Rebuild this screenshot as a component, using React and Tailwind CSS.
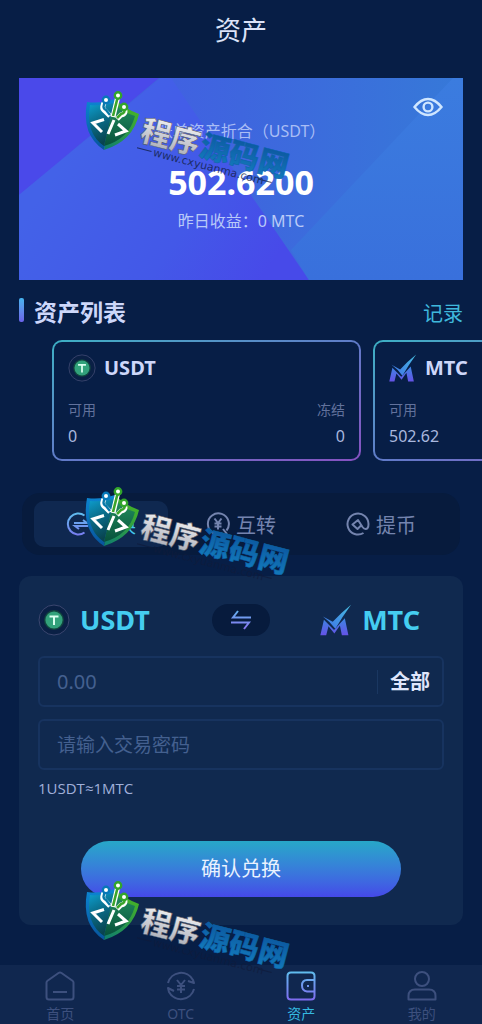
import React, { useId } from "react";

function Watermark({ className }) {
  const id = useId().replace(/:/g, "");
  return (
    <svg
      aria-hidden="true"
      className={`pointer-events-none absolute z-10 overflow-visible ${className}`}
      width="214"
      height="94"
      viewBox="0 0 214 94"
      fill="none"
    >
      <defs>
        <linearGradient id={`${id}l`} x1="0" y1="0" x2="0" y2="1">
          <stop offset="0" stopColor="#0c86d2" />
          <stop offset="1" stopColor="#07549c" />
        </linearGradient>
        <linearGradient id={`${id}r`} x1="0.8" y1="0" x2="0.2" y2="1">
          <stop offset="0" stopColor="#4bb81f" />
          <stop offset="1" stopColor="#12806a" />
        </linearGradient>
        <linearGradient id={`${id}i`} x1="0" y1="0" x2="0.3" y2="1">
          <stop offset="0" stopColor="#0d9fd0" />
          <stop offset="0.5" stopColor="#0a6a86" />
          <stop offset="1" stopColor="#08434f" />
        </linearGradient>
        <linearGradient id={`${id}g`} x1="0" y1="0" x2="0" y2="1">
          <stop offset="0" stopColor="#23915f" />
          <stop offset="1" stopColor="#07503b" />
        </linearGradient>
        <linearGradient id={`${id}s`} x1="0" y1="0" x2="0" y2="1">
          <stop offset="0" stopColor="#ffffff" />
          <stop offset="1" stopColor="#a3a6b2" />
        </linearGradient>
        <linearGradient id={`${id}b`} x1="0" y1="0" x2="0" y2="1">
          <stop offset="0" stopColor="#0a4f98" />
          <stop offset="1" stopColor="#147fc0" />
        </linearGradient>
      </defs>
      <path d="M3 12 Q17 14 31 9 L20 60 Q-3 45 3 12Z" fill={`url(#${id}l)`} />
      <path d="M31 9 Q41 19 55 24 Q49 51 20 60Z" fill={`url(#${id}r)`} />
      <path d="M6 15 Q19 16 30 13 L20 56 Q1 43 6 15Z" fill={`url(#${id}i)`} />
      <path d="M30 13 Q40 23 51 26 Q45 49 20 56Z" fill={`url(#${id}g)`} />
      <path d="M22 10 Q16 18 21 21 L26 26 M34 6 L29 27 M40 18 Q43 24 37 25 L33 29" stroke="#fff" strokeWidth="5" />
      <path d="M22 10 Q17 18 22 20 L26 25" stroke="#0878a8" strokeWidth="2.4" />
      <path d="M34 6 L29 26 M40 18 Q42 23 37 24 L33 28" stroke="#3ba52b" strokeWidth="2.6" />
      <circle cx="22" cy="10" r="3.200" fill="#fff" stroke="#0878b8" strokeWidth="2.400" />
      <circle cx="34" cy="5.500" r="3.200" fill="#fff" stroke="#32a52a" strokeWidth="2.400" />
      <circle cx="40" cy="17" r="3.200" fill="#fff" stroke="#32a52a" strokeWidth="2.400" />
      <path d="M20 29.500 L9 33 L18 42 M30 30 L24 44 M34 34 L42 41 L31 45" stroke="#fff" strokeWidth="3" />
      <g transform="translate(55 50) rotate(14.5)">
        <g fontFamily="'Noto Sans CJK SC', sans-serif" fontSize="30" fontWeight="900">
          <text x="0" y="0" fill={`url(#${id}s)`} stroke="#4e5362" strokeWidth="0.5">程序</text>
          <text x="61" y="0" fill={`url(#${id}b)`} stroke="#0b63a8" strokeWidth="0.5">源码网</text>
        </g>
        <g opacity="0.75">
          <text x="17" y="12" fontSize="11" fill="#101c3c" fontFamily="'DejaVu Sans', sans-serif">
            www.cxyuanma.com
          </text>
          <path d="M0 8 H15 M125 8 H139" stroke="#101c3c" />
        </g>
      </g>
    </svg>
  );
}

function UsdtIcon({ className }) {
  return (
    <svg aria-hidden="true" className={className} viewBox="0 0 32 32" fill="none">
      <circle cx="16" cy="16" r="15" fill="#0a2045" stroke="#3b466f" />
      <circle cx="16" cy="16" r="10" fill="#12463f" />
      <circle cx="16" cy="16" r="8.6" fill="#32a27b" />
      <path d="M11.5 12.5 H20.5 M16 12.5 V21" stroke="#d9fff0" strokeWidth="2" />
    </svg>
  );
}

function MtcIcon({ className }) {
  const id = useId().replace(/:/g, "");
  return (
    <svg aria-hidden="true" className={className} viewBox="0 0 96 98">
      <defs>
        <linearGradient id={`${id}c`} x1="1" y1="0" x2="0" y2="1">
          <stop offset="0" stopColor="#46bfe0" />
          <stop offset="1" stopColor="#3f6fe8" />
        </linearGradient>
        <linearGradient id={`${id}m`} x1="0" y1="0" x2="0" y2="1">
          <stop offset="0" stopColor="#3c86e2" />
          <stop offset="1" stopColor="#6552e6" />
        </linearGradient>
      </defs>
      <path d="M8 38 L38 54 Q62 28 94 2 Q68 38 46 76 Q30 54 8 38Z" fill={`url(#${id}c)`} />
      <path d="M11 48 L42 80 L58 62 L75 44 L86 96 H66 L60 66 L43 90 L25 68 L18 96 H0Z" fill={`url(#${id}m)`} />
    </svg>
  );
}

function IconGradient({ id }) {
  return (
    <defs>
      <linearGradient id={id} gradientUnits="userSpaceOnUse" x1="0" y1="0" x2="0" y2="30">
        <stop offset="0" stopColor="#5fc0ee" />
        <stop offset="1" stopColor="#8068f0" />
      </linearGradient>
    </defs>
  );
}

function AssetCard({ icon, name, available, frozen }) {
  return (
    <article className="w-[309px] shrink-0 rounded-[10px] bg-linear-to-br from-[#3bb0c4] via-[#5f7bc8] to-[#8550c0] p-[2px]">
      <div className="h-[117px] rounded-[8px] bg-[#071e46] px-3.5 pt-3">
        <div className="flex h-7 items-center gap-2">
          {icon}
          <h3 className="text-[20px] leading-7 font-bold text-[#cdd7fa]">{name}</h3>
        </div>
        <dl className="mt-4 flex justify-between text-[#a9b7de]">
          <div>
            <dt className="text-[14px] leading-6 text-[#62729c]">可用</dt>
            <dd className="text-[16px] leading-7">{available}</dd>
          </div>
          <div className="text-right">
            <dt className="text-[14px] leading-6 text-[#62729c]">冻结</dt>
            <dd className="text-[16px] leading-7">{frozen}</dd>
          </div>
        </dl>
      </div>
    </article>
  );
}

function Hero() {
  return (
    <section className="relative h-[202px] text-center">
      <svg aria-hidden="true" className="absolute inset-0 h-full w-full" viewBox="0 0 444 202" preserveAspectRatio="none">
        <defs>
          <linearGradient id="heroBase" x1="0" y1="0" x2="1" y2="0">
            <stop offset="0" stopColor="#4658e8" />
            <stop offset="0.5" stopColor="#3e66de" />
            <stop offset="1" stopColor="#3679d8" />
          </linearGradient>
          <linearGradient id="heroLeft" gradientUnits="userSpaceOnUse" x1="60" y1="60" x2="250" y2="190">
            <stop offset="0" stopColor="#4362e8" />
            <stop offset="0.6" stopColor="#4358e8" />
            <stop offset="1" stopColor="#474ae9" />
          </linearGradient>
          <linearGradient id="heroRight" x1="0" y1="0" x2="0" y2="1">
            <stop offset="0" stopColor="#3b7cdf" />
            <stop offset="1" stopColor="#3970dc" />
          </linearGradient>
        </defs>
        <path d="M0 0 H444 V202 H0Z" fill="url(#heroBase)" />
        <path d="M0 0 H140 L0 117Z" fill="#4a49ea" />
        <path d="M0 117 L142 0 H152 L290 202 H0Z" fill="url(#heroLeft)" />
        <path d="M444 0 V202 H290 L272 172 L434 0Z" fill="url(#heroRight)" />
      </svg>
      <div className="relative pt-[39px]">
        <button type="button" aria-label="隐藏余额" className="absolute top-4 right-5">
          <svg width="30" height="26" viewBox="0 0 30 26" fill="none" stroke="#cfe6ff" strokeWidth="2.4">
            <path d="M1.5 13 Q8 5 15 5 T28.500 13 Q22 21 15 21 T1.500 13Z" />
            <circle cx="15" cy="13" r="4.400" />
          </svg>
        </button>
        <p className="text-[16px] leading-7 text-[#a9bdf5]">账单资产折合（USDT）</p>
        <p className="mt-3 text-[34px] leading-[50px] font-bold text-white">502.6200</p>
        <p className="text-[16px] leading-7 text-[#b9caf8]">昨日收益：0 MTC</p>
      </div>
      <Watermark className="top-3 left-[65px]" />
    </section>
  );
}

function Tabs() {
  return (
    <div role="tablist" className="relative mx-[3px] mt-8 grid grid-cols-3 gap-1.5 rounded-[18px] bg-[#071b3d] px-3 py-2 text-[20px] text-[#7484ae]">
      <button type="button" role="tab" aria-selected="true" className="flex h-[46px] items-center justify-center gap-1.5 rounded-[10px] bg-[#0f2850] text-[#45c8ee]">
        <svg width="24" height="24" viewBox="0 0 24 24" fill="none" stroke="url(#tabIcon)" strokeWidth="2">
          <IconGradient id="tabIcon" />
          <path d="M18.500 3.500 A10.500 10.500 0 1 0 18.500 20.500 M8 11 H21 L17 8 M22 14 H9 L13 17" />
        </svg>
        <span className="pt-1">兑换</span>
      </button>
      <button type="button" role="tab" aria-selected="false" className="flex h-[46px] items-center justify-center gap-1.5">
        <svg width="24" height="24" viewBox="0 0 24 24" fill="none" stroke="currentColor" strokeWidth="2">
          <path d="M16.500 21.500 A10.500 10.500 0 1 1 20.500 18.500 M17 17 L21 22 M8.500 6.500 L12 11 L15.500 6.500 M12 11 V17.500 M8.500 11.500 H15.500 M8.500 14.500 H15.500" />
        </svg>
        <span className="pt-1">互转</span>
      </button>
      <button type="button" role="tab" aria-selected="false" className="flex h-[46px] items-center justify-center gap-1.5">
        <svg width="24" height="24" viewBox="0 0 24 24" fill="none" stroke="currentColor" strokeWidth="2">
          <path d="M17.500 21 A10.500 10.500 0 1 1 22.500 12 Q22.500 17 19.500 17 Q18 17 16.500 15 L12 8 L6.500 12.500 L11.500 17 L16 12.500" strokeLinejoin="round" />
        </svg>
        <span className="pt-1">提币</span>
      </button>
      <Watermark className="-top-[7px] left-[62px]" />
    </div>
  );
}

function ExchangeForm() {
  return (
    <form className="relative mt-[21px] rounded-[12px] bg-[#10294f] px-[19px] pt-6 pb-7" onSubmit={(e) => e.preventDefault()}>
      <div className="grid grid-cols-[1fr_auto_1fr] items-center text-[27px] leading-10 font-bold text-[#45cdf0]">
        <div className="flex items-center gap-2.5">
          <UsdtIcon className="h-8 w-8" />
          USDT
        </div>
        <button type="button" aria-label="切换币种" className="flex h-8 w-[58px] items-center justify-center rounded-full bg-[#071b3d]">
          <svg width="22" height="20" viewBox="0 0 22 20" fill="none" stroke="url(#swapIcon)" strokeWidth="2">
            <defs>
              <linearGradient id="swapIcon" gradientUnits="userSpaceOnUse" x1="0" y1="0" x2="0" y2="20">
                <stop offset="0" stopColor="#62b4ee" />
                <stop offset="1" stopColor="#8a70f0" />
              </linearGradient>
            </defs>
            <path d="M8 1 L3 7.500 H21 M1 12.500 H19 L14 19" />
          </svg>
        </button>
        <div className="flex items-center justify-end gap-2.5 pr-6">
          <MtcIcon className="h-8 w-8" />
          MTC
        </div>
      </div>
      <div className="mt-4 flex h-[51px] items-center rounded-[6px] border-2 border-[#17335f] pr-3 pl-[17px]">
        <input
          aria-label="兑换数量"
          placeholder="0.00"
          className="w-full min-w-0 flex-1 bg-transparent text-[20px] text-white outline-none placeholder:text-[#44608f]"
        />
        <button type="button" className="border-l border-[#1a3761] pl-3 text-[20px] leading-6 font-bold text-[#dfe5fb]">
          全部
        </button>
      </div>
      <input
        type="password"
        aria-label="交易密码"
        placeholder="请输入交易密码"
        className="mt-3 block h-[51px] w-full rounded-[6px] border-2 border-[#17335f] bg-transparent px-[17px] text-[19px] text-white outline-none placeholder:text-[#44608f]"
      />
      <p className="mt-1.5 font-['Open_Sans',sans-serif] text-[15px] leading-6 text-[#a0b0da]">1USDT≈1MTC</p>
      <button
        type="submit"
        className="mx-auto mt-[41px] block h-14 w-[79%] rounded-full bg-linear-to-b from-[#27a7c8] to-[#4548e8] text-[20px] text-[#eaf2ff]"
      >
        确认兑换
      </button>
      <Watermark className="bottom-[-49px] left-[65px]" />
    </form>
  );
}

const navIcons = {
  home: <path d="M1.500 11.500 Q1.500 10.500 2.500 9.800 L13.500 2 Q15 1 16.500 2 L27.500 9.800 Q28.500 10.500 28.500 11.500 V26 Q28.500 28.500 26 28.500 H4 Q1.500 28.500 1.500 26Z M8 21 H22" />,
  otc: <path d="M2 12 A13.500 13.500 0 0 1 27 9 L28 12 L22 10 M28 18 A13.500 13.500 0 0 1 3 21 L2 17 L8 20 M11 9 L15 14 L19 9 M15 14 V22 M11 15 H19 M11 18.500 H19" />,
  wallet: <path d="M5 1.500 H25 Q28.500 1.500 28.500 5 V25 Q28.500 28.500 25 28.500 H5 Q1.500 28.500 1.500 25 V5 Q1.500 1.500 5 1.500Z M28.500 9 H21 Q16 9 16 14.500 T21 20.500 H28.500 M21 15 H23" />,
  user: <path d="M22 8 A7 7 0 1 1 8 8 A7 7 0 1 1 22 8Z M1.500 28.500 V25 Q1.500 18.500 8 18.500 H22 Q28.500 18.500 28.500 25 V28.500Z" />,
};

function NavItem({ icon, label, active }) {
  return (
    <a
      href="#"
      aria-current={active ? "page" : undefined}
      className={`flex flex-col items-center text-[14px] leading-[18px] ${active ? "text-[#35b9e0]" : "text-[#3d507e]"}`}
    >
      <svg aria-hidden="true" width="30" height="30" viewBox="0 0 30 30" fill="none" stroke={active ? "url(#navIcon)" : "currentColor"} strokeWidth="2" strokeLinejoin="round">
        {active && <IconGradient id="navIcon" />}
        {navIcons[icon]}
      </svg>
      <span className="mt-1">{label}</span>
    </a>
  );
}

export default function App() {
  return (
    <div className="flex min-h-screen flex-col overflow-hidden bg-[#071e46] font-['Noto_Sans','Noto_Sans_CJK_SC',sans-serif]">
      <header className="flex h-[78px] items-start justify-center pt-3">
        <h1 className="text-[26px] leading-9 text-[#dce3f8]">资产</h1>
      </header>
      <main className="flex-1 px-[19px] pb-10">
        <Hero />
        <div className="flex h-[60px] items-center justify-between">
          <div className="flex items-center gap-2.5">
            <span className="h-6 w-[5px] rounded-xs bg-linear-to-b from-[#44b4ee] to-[#6a62ea]" />
            <h2 className="pt-1 text-[23px] leading-8 font-bold text-[#cdd7fa]">资产列表</h2>
          </div>
          <a href="#" className="pt-2 text-[20px] leading-8 text-[#3fb8dc]">记录</a>
        </div>
        <div className="-mr-[19px] ml-[33px] flex gap-3 overflow-x-auto [scrollbar-width:none]">
          <AssetCard icon={<UsdtIcon className="h-7 w-7" />} name="USDT" available="0" frozen="0" />
          <AssetCard icon={<MtcIcon className="h-7 w-7" />} name="MTC" available="502.62" frozen="0" />
        </div>
        <Tabs />
        <ExchangeForm />
      </main>
      <nav className="grid h-[59px] grid-cols-4 bg-[#10274f] pt-1.5">
        <NavItem icon="home" label="首页" />
        <NavItem icon="otc" label="OTC" />
        <NavItem icon="wallet" label="资产" active />
        <NavItem icon="user" label="我的" />
      </nav>
    </div>
  );
}
